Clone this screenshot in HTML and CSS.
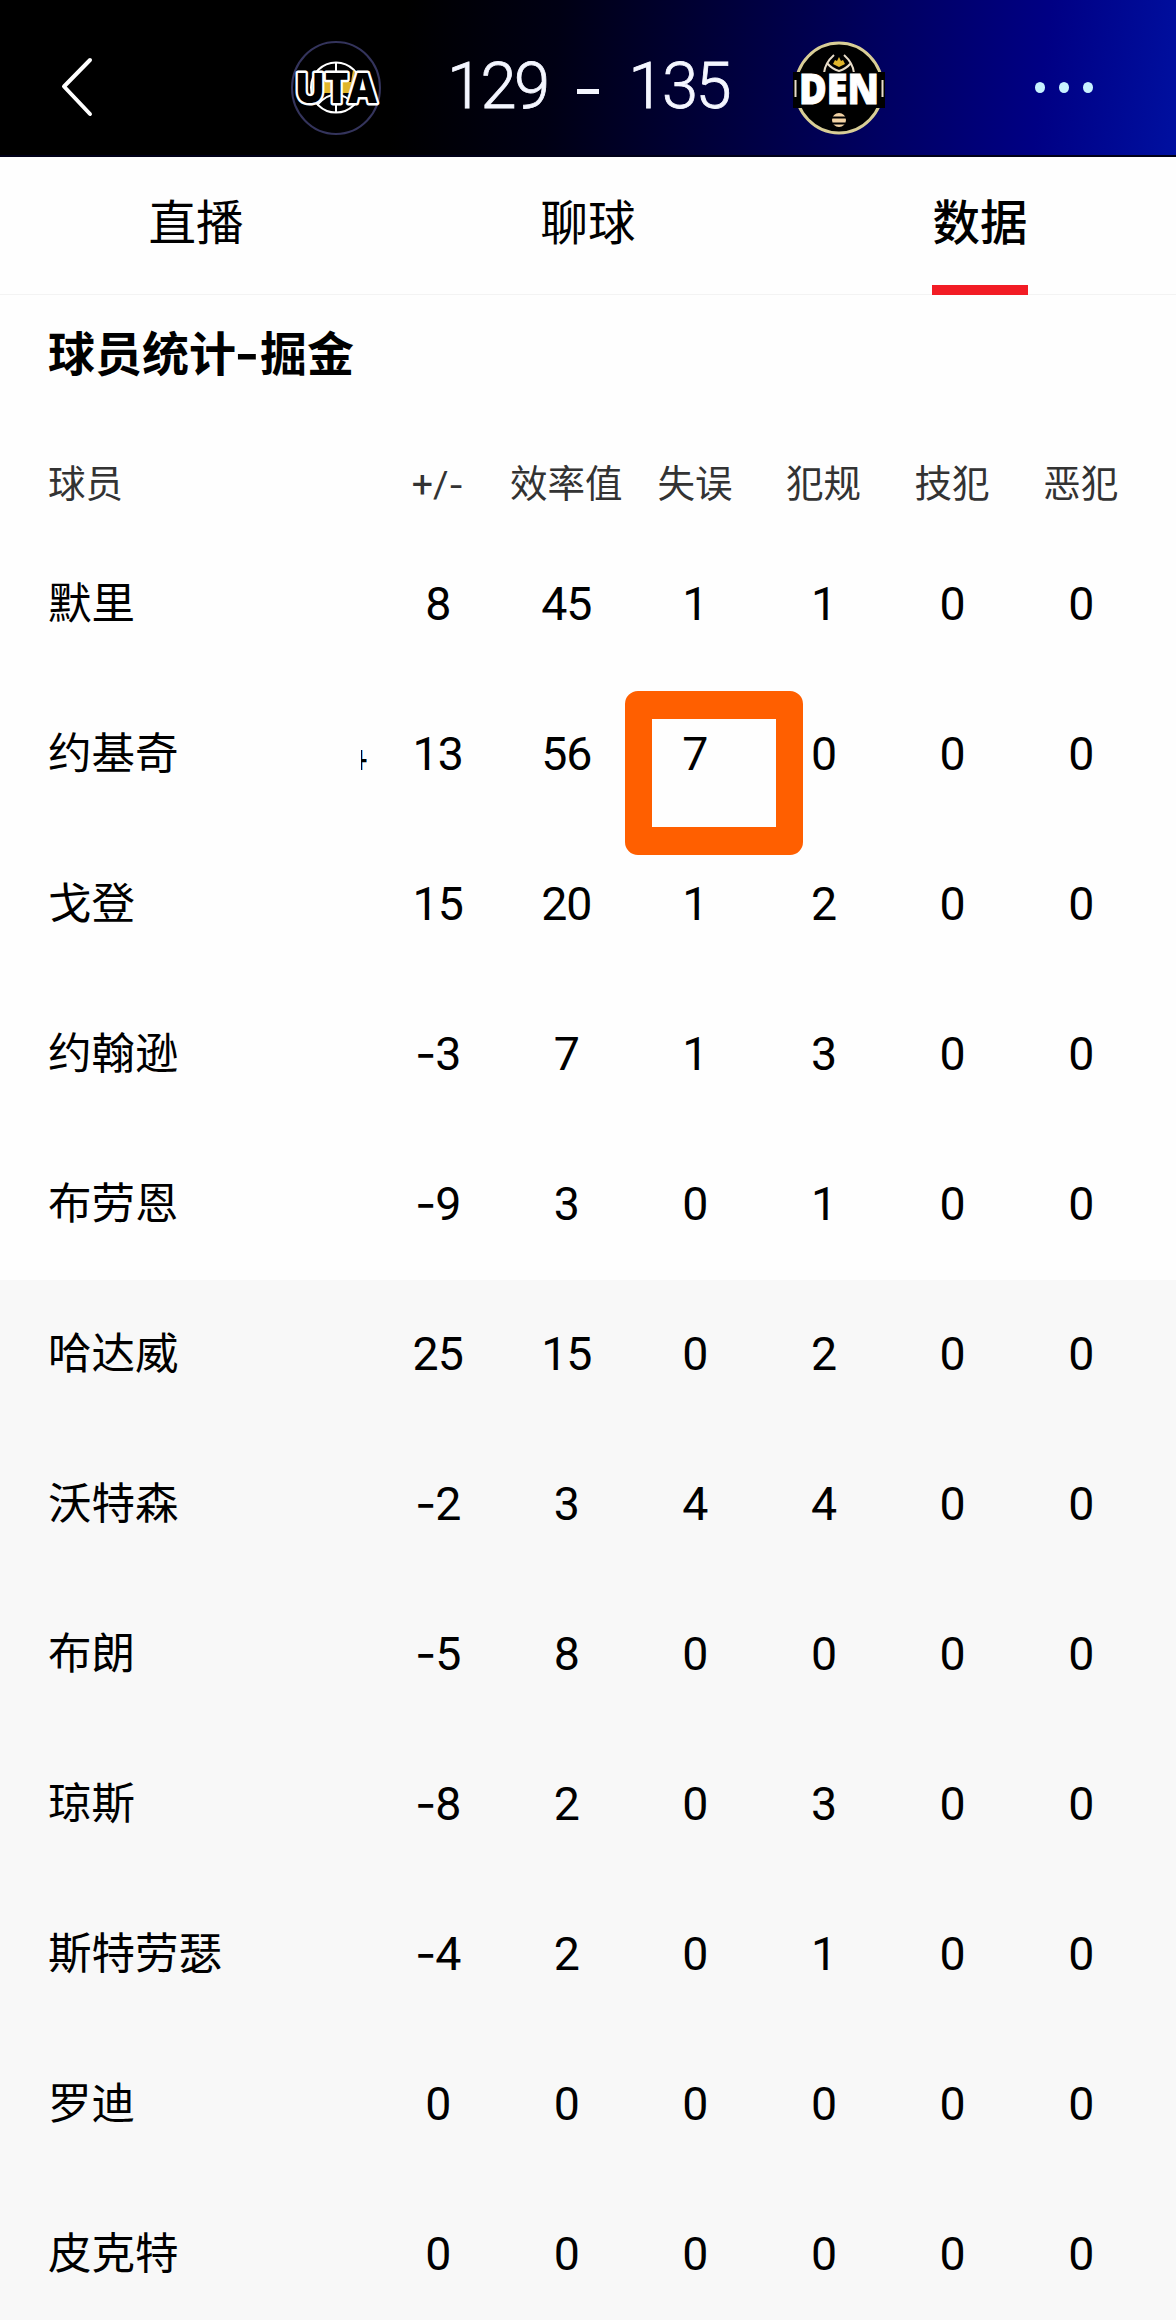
FILE: index.html
```
<!DOCTYPE html>
<html lang="zh-CN">
  <head>
    <meta charset="UTF-8">
    <title>球员统计-掘金</title>
    <link rel="stylesheet" href="styles.css">
  </head>
  <body>
    <header class="topbar">
      <svg class="back" width="34" height="60" viewBox="0 0 34 60"><path d="M30 3L4 29.5L30 57"/></svg>
      <svg class="logo uta" width="92" height="96" viewBox="0 0 92 96">
        <ellipse class="ring" cx="46" cy="48" rx="44" ry="46"/>
        <circle class="ball" cx="46" cy="47.500" r="25"/>
        <path class="gold" d="M34 42h27l2-12 2 2-2 21H34z"/>
        <path class="seam" d="M46 22v51M27 65q19-21 38 0"/>
        <text x="46" y="63" textLength="82" lengthAdjust="spacingAndGlyphs">UTA</text>
      </svg>
      <div class="score"><span>129</span><i></i><span>135</span></div>
      <svg class="logo den" width="92" height="96" viewBox="0 0 92 96">
        <ellipse class="ring" cx="46" cy="48" rx="43.500" ry="45"/>
        <path class="pick" d="M31 33q1-10 10-18M61 33q-1-10-10-18M34 23q5 6 12 8q7-2 12-8"/>
        <path class="gold" d="M40 24l2-4 2 1 2-4 2 4 2-1 2 4-6 3z"/>
        <rect class="band" x="0" y="32" width="92" height="36"/>
        <path class="side" d="M2.500 40v17M89.500 40v17"/>
        <text x="46" y="64" textLength="80" lengthAdjust="spacingAndGlyphs">DEN</text>
        <circle class="dot" cx="46" cy="80" r="7"/>
        <path class="lines" d="M39 77.500h14M39 83.500h14"/>
      </svg>
      <div class="more"><i></i><i></i><i></i></div>
    </header>

    <nav class="tabs">
      <a class="tab">直播</a>
      <a class="tab">聊球</a>
      <a class="tab active">数据</a>
    </nav>

    <h1 class="title">球员统计<b>-</b>掘金</h1>

    <div class="stats">
      <div class="row head"><span>球员</span><span>+/<b>-</b></span><span>效率值</span><span>失误</span><span>犯规</span><span>技犯</span><span>恶犯</span></div>
      <div class="row"><span>默里</span><span>8</span><span>45</span><span>1</span><span>1</span><span>0</span><span>0</span></div>
      <div class="row">
        <span class="name">约基奇<em class="peek">4</em></span><span>13</span><span>56</span>
        <span class="marked">7</span><span>0</span><span>0</span><span>0</span>
      </div>
      <div class="row"><span>戈登</span><span>15</span><span>20</span><span>1</span><span>2</span><span>0</span><span>0</span></div>
      <div class="row"><span>约翰逊</span><span><b>-</b>3</span><span>7</span><span>1</span><span>3</span><span>0</span><span>0</span></div>
      <div class="row"><span>布劳恩</span><span><b>-</b>9</span><span>3</span><span>0</span><span>1</span><span>0</span><span>0</span></div>
      <div class="row bench"><span>哈达威</span><span>25</span><span>15</span><span>0</span><span>2</span><span>0</span><span>0</span></div>
      <div class="row bench"><span>沃特森</span><span><b>-</b>2</span><span>3</span><span>4</span><span>4</span><span>0</span><span>0</span></div>
      <div class="row bench"><span>布朗</span><span><b>-</b>5</span><span>8</span><span>0</span><span>0</span><span>0</span><span>0</span></div>
      <div class="row bench"><span>琼斯</span><span><b>-</b>8</span><span>2</span><span>0</span><span>3</span><span>0</span><span>0</span></div>
      <div class="row bench"><span>斯特劳瑟</span><span><b>-</b>4</span><span>2</span><span>0</span><span>1</span><span>0</span><span>0</span></div>
      <div class="row bench"><span>罗迪</span><span>0</span><span>0</span><span>0</span><span>0</span><span>0</span><span>0</span></div>
      <div class="row bench"><span>皮克特</span><span>0</span><span>0</span><span>0</span><span>0</span><span>0</span><span>0</span></div>
    </div>
  </body>
</html>
```
FILE: styles.css
```
*, *::after {
box-sizing: border-box;
}
body {
margin: 0;
height: 2320px;
overflow: hidden;
background: #fefefe;
color: #000;
font-family: Roboto, "Noto Sans CJK SC", sans-serif;
}

/* score bar */
.topbar {
display: flex;
align-items: center;
height: 157px;
padding: 20px 83px 0 60px;
background: linear-gradient(97deg, #000 0%, #000 34%, #000014 47%, #000038 60%, #000062 75%, #000084 88%, #0010a0 100%);
border-bottom: 2px solid #000018;
}
.back {
fill: none;
stroke: #fff;
stroke-width: 4;
stroke-linecap: round;
stroke-linejoin: round;
margin: -2px 196px 0 0;
}
.logo {
flex: none;
}
.logo .ring {
fill: #000;
stroke: #34345c;
stroke-width: 2;
}
.logo text {
font: 800 42px "Open Sans", sans-serif;
text-anchor: middle;
}
.uta .ball, .uta .seam {
fill: none;
stroke: #fff;
stroke-width: 2;
}
.logo .gold {
fill: #e0b52c;
}
.uta text {
fill: #000;
stroke: #fff;
stroke-width: 5;
stroke-linejoin: round;
paint-order: stroke;
}
.den .ring {
stroke: #d8cd96;
stroke-width: 3;
}
.den .pick, .den .side, .den .lines {
fill: none;
stroke: #e8dcc8;
stroke-width: 2;
}
.den .lines {
stroke: #000;
}
.den .dot {
fill: #f3d3a4;
}
.den text {
fill: #fff;
stroke: #fff;
stroke-width: 1;
}
.score {
display: flex;
align-items: center;
justify-content: space-between;
width: 282px;
margin: -2px 64px 0 65px;
color: #f4f6ff;
font-size: 65px;
font-weight: 300;
line-height: 1;
letter-spacing: -2.5px;
-webkit-text-stroke: 0.8px #f4f6ff;
}
.score i {
width: 22px;
height: 5px;
margin-top: 9px;
background: #f4f6ff;
}
.more {
display: flex;
gap: 14px;
margin-left: auto;
}
.more i {
width: 10px;
height: 11px;
border-radius: 50%;
background: #c8f2ff;
}

/* tabs */
.tabs {
display: flex;
height: 138px;
border-bottom: 1px solid #f3f3f3;
}
.tab {
display: flex;
justify-content: center;
flex: 1;
line-height: 135px;
font-size: 47.5px;
}
.tab.active {
font-weight: 500;
}
.tab.active::after {
content: "";
position: absolute;
width: 96px;
height: 10px;
margin-top: 128px;
background: #f21c24;
}

.title {
margin: 0;
height: 142px;
padding-left: 48px;
font-size: 47px;
font-weight: 700;
line-height: 118px;
}
b {
display: inline-block;
font-family: Inter, sans-serif;
font-weight: inherit;
}
.title b {
width: 24px;
transform: scaleX(1.15);
}

/* player table */
.row {
display: grid;
grid-template-columns: 1fr repeat(6, 128.6px);
align-items: center;
height: 150px;
padding: 0 31px 0 48px;
font-size: 46.5px;
line-height: 60px;
letter-spacing: -1px;
}
.row span {
padding-bottom: 3px;
text-align: center;
white-space: nowrap;
}
.row span:first-child {
padding-bottom: 0;
text-align: left;
font-size: 43.5px;
letter-spacing: 0;
}
.row.head, .row.head span:first-child {
color: #333;
font-size: 37.5px;
letter-spacing: 0;
}
.row.head span {
padding-bottom: 0;
}
.head b {
font-size: 33px;
}
.row.head {
height: 94px;
margin-bottom: -1px;
}
.row.bench {
background: #f8f8f8;
}
.name {
display: flex;
align-items: center;
justify-content: space-between;
}
/* edge of the column scrolled under the names */
.peek {
display: flex;
justify-content: flex-end;
width: 6px;
height: 22px;
margin: 11px 6px 0 0;
overflow: hidden;
font-style: normal;
line-height: 12px;
}
.marked {
position: relative;
}
/* frame round the turnovers figure */
.marked::after {
content: "";
position: absolute;
left: -6px;
top: -33px;
width: 178px;
height: 164px;
border: solid #ff5f00;
border-width: 28px 27px;
border-radius: 13px;
z-index: 1;
}
```
